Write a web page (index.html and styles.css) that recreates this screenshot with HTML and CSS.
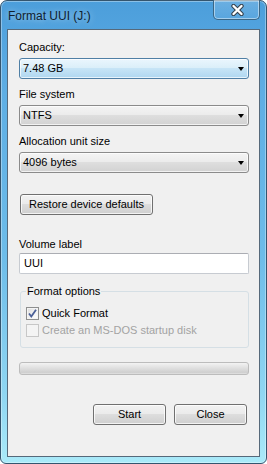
FILE: index.html
```html
<!DOCTYPE html>
<html>

<head>
    <meta charset="UTF-8">
    <title>Format UUI (J:)</title>
    <link rel="stylesheet" href="styles.css">
</head>

<body>
    <div class="window">
        <div class="titlebar">
            <span class="title">Format UUI (J:)</span>
            <a href="javascript:;" class="close-btn">
                <svg width="13" height="12" viewBox="0 0 13 12">
                    <path d="M2.5 2 L10.5 10 M10.5 2 L2.5 10" stroke="#35414d" stroke-width="4.4" stroke-linecap="round" />
                    <path d="M2.5 2 L10.5 10 M10.5 2 L2.5 10" stroke="#fff" stroke-width="2.4" stroke-linecap="round" />
                </svg>
            </a>
        </div>
        <div class="client">
            <div class="field-label first">Capacity:</div>
            <div class="combo focused"><span>7.48 GB</span><i class="arrow"></i></div>

            <div class="field-label">File system</div>
            <div class="combo"><span>NTFS</span><i class="arrow"></i></div>

            <div class="field-label">Allocation unit size</div>
            <div class="combo"><span>4096 bytes</span><i class="arrow"></i></div>

            <div class="restore-row">
                <a href="javascript:;" class="btn restore">Restore device defaults</a>
            </div>

            <div class="field-label volume">Volume label</div>
            <div class="textbox">UUI</div>

            <fieldset class="group">
                <legend>Format options</legend>
                <div class="check">
                    <span class="box">
                        <svg width="11" height="11" viewBox="0 0 11 11">
                            <path d="M2 5.5 L4.3 8.5 L9 1.8" fill="none" stroke="#4a5f97" stroke-width="1.8" />
                        </svg>
                    </span>
                    Quick Format
                </div>
                <div class="check disabled">
                    <span class="box"></span>
                    Create an MS-DOS startup disk
                </div>
            </fieldset>

            <div class="progress"></div>

            <div class="actions">
                <a href="javascript:;" class="btn">Start</a>
                <a href="javascript:;" class="btn">Close</a>
            </div>
        </div>
    </div>
</body>

</html>
```

FILE: styles.css
```css
/* reset */
body,
div,
fieldset,
legend {
    margin: 0;
    padding: 0;
}

body {
    width: 267px;
    height: 464px;
    font: 11px/15px "Liberation Sans", Arial, sans-serif;
    color: #000;
    background: #fff;
}

a {
    text-decoration: none;
    color: #000;
}

/* window frame */
.window {
    width: 267px;
    height: 464px;
    box-sizing: border-box;
    border: 1px solid #34556f;
    border-radius: 7px 7px 6px 6px;
    padding: 0 6px 6px;
    display: flex;
    flex-direction: column;
    background: linear-gradient(to bottom, #4c9edb 0%, #5eaee4 20%, #6dbce9 55%, #8fd6f2 85%, #aaeaf9 100%);
    box-shadow: inset 0 0 0 1px rgba(255, 255, 255, 0.35);
}

.titlebar {
    height: 28px;
    display: flex;
    justify-content: space-between;
    align-items: flex-start;
}

.title {
    padding: 8px 0 0 1px;
    font-size: 12px;
    color: #10212f;
    text-shadow: 0 0 6px rgba(255, 255, 255, 0.6);
}

.close-btn {
    width: 47px;
    height: 20px;
    margin-top: -1px;
    box-sizing: border-box;
    border: 1px solid #3b6685;
    border-top: 0;
    border-radius: 0 0 5px 5px;
    background: linear-gradient(to bottom, rgba(255, 255, 255, 0.18), rgba(255, 255, 255, 0.05));
    box-shadow: inset 0 0 0 1px rgba(255, 255, 255, 0.45);
    display: flex;
    justify-content: center;
    align-items: center;
    padding-left: 1px;
}

/* client area */
.client {
    flex: 1;
    border: 1px solid #56697a;
    background: #f0f0f0;
    padding: 0 10px 0 11px;
    display: flex;
    flex-direction: column;
}

.field-label {
    margin: 8px 0 3px;
}

.field-label.first {
    margin-top: 10px;
}

.field-label.volume {
    margin: 22px 0 1px;
}

.combo {
    height: 21px;
    box-sizing: border-box;
    border: 1px solid #8b8b8b;
    border-radius: 3px;
    padding: 0 4px 0 3px;
    display: flex;
    justify-content: space-between;
    align-items: center;
    background: linear-gradient(to bottom, #f4f4f4 0%, #ececec 45%, #dedede 50%, #d2d2d2 100%);
    box-shadow: inset 0 0 0 1px rgba(255, 255, 255, 0.7);
}

.combo.focused {
    border-color: #4f7fa5;
    background: linear-gradient(to bottom, #eaf6fd 0%, #dbeff9 45%, #c6e4f6 50%, #afd7f0 100%);
}

.arrow {
    width: 0;
    height: 0;
    border-left: 3.5px solid transparent;
    border-right: 3.5px solid transparent;
    border-top: 4px solid #000;
}

/* buttons */
.btn {
    height: 21px;
    box-sizing: border-box;
    border: 1px solid #707070;
    border-radius: 3px;
    display: flex;
    justify-content: center;
    align-items: center;
    background: linear-gradient(to bottom, #f2f2f2 0%, #ebebeb 45%, #dddddd 50%, #cfcfcf 100%);
    box-shadow: inset 0 0 0 1px rgba(255, 255, 255, 0.75);
}

.restore-row {
    display: flex;
    margin: 21px 0 0 1px;
}

.restore {
    width: 133px;
}

.textbox {
    height: 21px;
    box-sizing: border-box;
    border: 1px solid #c7cbd1;
    border-top-color: #abadb3;
    border-radius: 2px;
    background: #fff;
    padding: 0 4px;
    display: flex;
    align-items: center;
}

/* group box */
.group {
    margin: 10px 0 0 1px;
    border: 1px solid #d5dfe5;
    border-radius: 3px;
    padding: 6px 5px 8px;
}

.group legend {
    padding: 0 1px;
}

.check {
    height: 17px;
    display: flex;
    align-items: center;
}

.box {
    width: 13px;
    height: 13px;
    box-sizing: border-box;
    border: 1px solid #8e8f8f;
    margin-right: 3px;
    display: flex;
    justify-content: center;
    align-items: center;
    background: linear-gradient(135deg, #dcdcdc 0%, #f4f4f4 60%, #fff 100%);
    box-shadow: inset 0 0 0 1px #f4f4f4;
}

.check.disabled {
    color: #a3a3a3;
}

.check.disabled .box {
    border-color: #c7c7c7;
    background: #f4f4f4;
    box-shadow: none;
}

/* progress */
.progress {
    height: 13px;
    margin-top: 14px;
    box-sizing: border-box;
    border: 1px solid #bcbcbc;
    border-radius: 3px;
    background: linear-gradient(to bottom, #f3f3f3 0%, #e4e4e4 35%, #dadada 60%, #cfcfcf 85%, #e2e2e2 100%);
}

.actions {
    display: flex;
    justify-content: flex-end;
    gap: 8px;
    margin: 29px 2px 0 0;
}

.actions .btn {
    width: 73px;
}
```
